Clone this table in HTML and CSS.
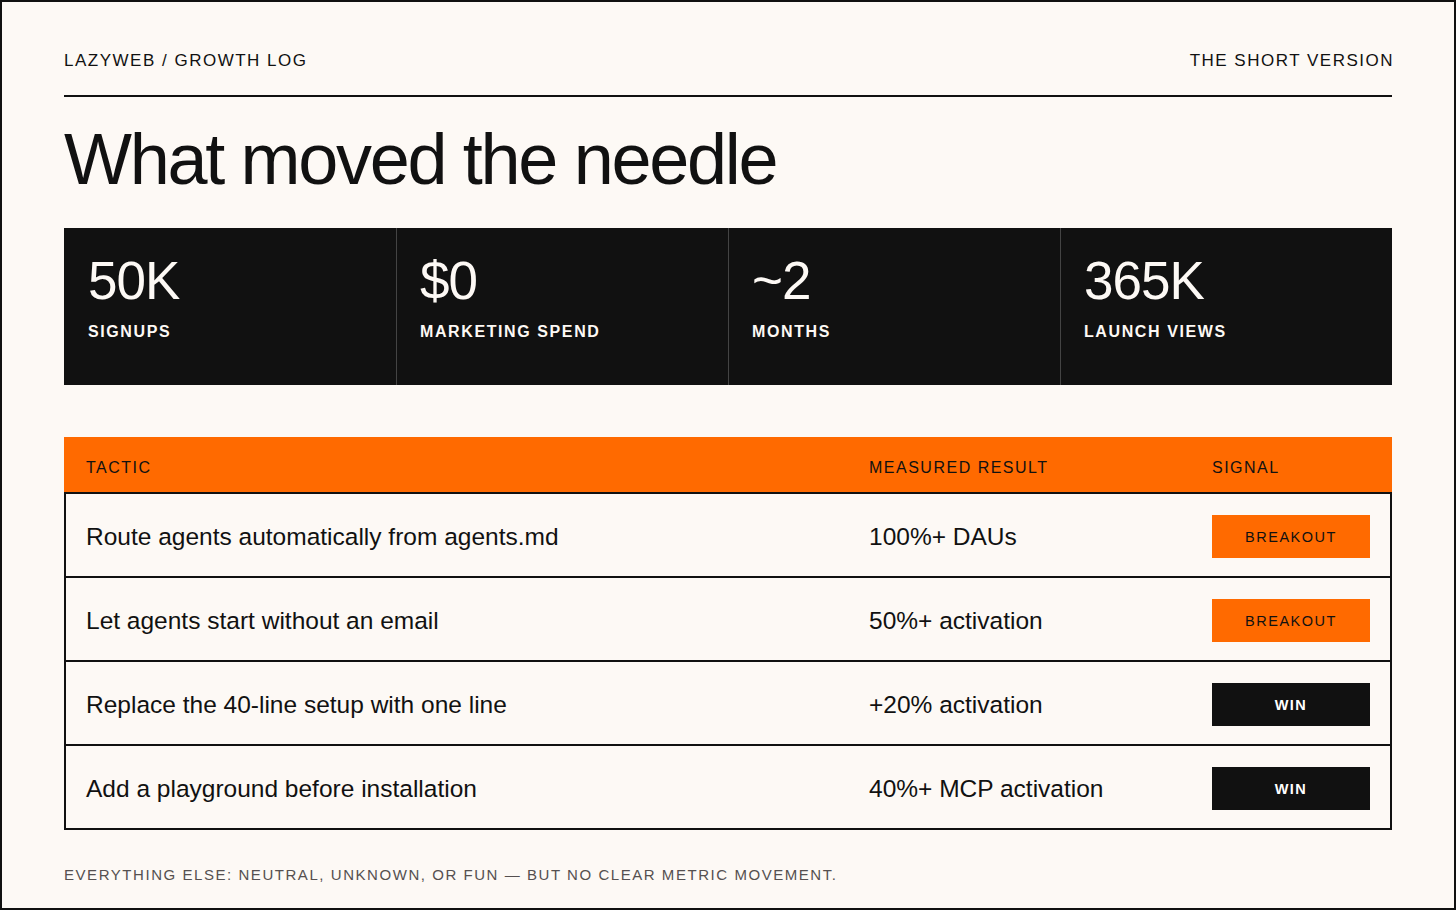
FILE: index.html
```html
<!DOCTYPE html>
<html lang="en">
<head>
<meta charset="utf-8">
<title>What moved the needle</title>
<link rel="stylesheet" href="styles.css">
</head>
<body>
<div class="frame">
  <header class="topbar">
    <span class="eyebrow">LAZYWEB / GROWTH LOG</span>
    <span class="eyebrow eyebrow-right">THE SHORT VERSION</span>
  </header>
  <h1 class="title">What moved the needle</h1>
  <section class="stats">
    <div class="stat"><div class="stat-num">50K</div><div class="stat-label">SIGNUPS</div></div>
    <div class="stat"><div class="stat-num">$0</div><div class="stat-label">MARKETING SPEND</div></div>
    <div class="stat"><div class="stat-num">~2</div><div class="stat-label">MONTHS</div></div>
    <div class="stat"><div class="stat-num">365K</div><div class="stat-label">LAUNCH VIEWS</div></div>
  </section>
  <section class="table">
    <div class="thead">
      <div class="th">TACTIC</div>
      <div class="th">MEASURED RESULT</div>
      <div class="th">SIGNAL</div>
    </div>
    <div class="tbody">
      <div class="row">
        <div class="cell">Route agents automatically from agents.md</div>
        <div class="cell">100%+ DAUs</div>
        <div class="cell"><span class="badge badge-breakout">BREAKOUT</span></div>
      </div>
      <div class="row">
        <div class="cell">Let agents start without an email</div>
        <div class="cell">50%+ activation</div>
        <div class="cell"><span class="badge badge-breakout">BREAKOUT</span></div>
      </div>
      <div class="row">
        <div class="cell">Replace the 40-line setup with one line</div>
        <div class="cell">+20% activation</div>
        <div class="cell"><span class="badge badge-win">WIN</span></div>
      </div>
      <div class="row">
        <div class="cell">Add a playground before installation</div>
        <div class="cell">40%+ MCP activation</div>
        <div class="cell"><span class="badge badge-win">WIN</span></div>
      </div>
    </div>
  </section>
  <footer class="footnote">EVERYTHING ELSE: NEUTRAL, UNKNOWN, OR FUN — BUT NO CLEAR METRIC MOVEMENT.</footer>
</div>
</body>
</html>
```
FILE: styles.css
```css
* { box-sizing: border-box; }
html, body { margin: 0; padding: 0; }
body {
  background: #fdf9f5;
  font-family: "Liberation Sans", Arial, Helvetica, sans-serif;
  color: #111111;
}
.frame {
  width: 1456px;
  height: 910px;
  border: 2px solid #111111;
  padding: 0 62px;
  display: flex;
  flex-direction: column;
}
.topbar {
  display: flex;
  justify-content: space-between;
  align-items: baseline;
  padding-top: 49px;
  padding-bottom: 24px;
  border-bottom: 2px solid #111111;
}
.eyebrow {
  font-size: 17px;
  line-height: 20px;
  letter-spacing: 1.5px;
}
.eyebrow-right { margin-right: -2px; }
.title {
  margin: 17px 0 0 0;
  font-size: 72px;
  line-height: 90px;
  font-weight: 400;
  letter-spacing: -2.3px;
}
.stats {
  margin-top: 24px;
  background: #111111;
  display: grid;
  grid-template-columns: repeat(4, 1fr);
  height: 157px;
}
.stat {
  padding: 24px 24px 0 23px;
  border-left: 1px solid #444444;
  color: #fdf9f5;
}
.stat:first-child { border-left: none; padding-left: 24px; }
.stat-num {
  font-size: 53px;
  line-height: 58px;
  letter-spacing: -1px;
}
.stat-label {
  margin-top: 12px;
  font-size: 16px;
  line-height: 20px;
  font-weight: 700;
  letter-spacing: 1.6px;
}
.table { margin-top: 52px; }
.thead {
  display: grid;
  grid-template-columns: 1fr 343px 202px;
  align-items: center;
  background: #ff6a00;
  height: 55px;
}
.th {
  padding: 6px 22px 0 22px;
  font-size: 16px;
  letter-spacing: 1.5px;
}
.tbody {
  border-left: 2px solid #111111;
  border-right: 2px solid #111111;
  border-bottom: 2px solid #111111;
}
.row {
  display: grid;
  grid-template-columns: 1fr 343px 200px;
  align-items: center;
  height: 84px;
  border-top: 2px solid #111111;
}
.cell {
  padding: 3px 20px 0 20px;
  font-size: 24.5px;
}
.cell:nth-child(2) { padding-left: 22px; }
.cell:nth-child(3) { padding: 2px 20px 0 22px; }
.badge {
  display: flex;
  align-items: center;
  justify-content: center;
  width: 158px;
  height: 43px;
  padding-top: 2px;
  font-size: 14.5px;
  letter-spacing: 1.5px;
}
.badge-breakout {
  background: #ff6a00;
  color: #111111;
}
.badge-win {
  background: #111111;
  color: #ffffff;
  font-weight: 700;
}
.footnote {
  margin-top: 35px;
  font-size: 15px;
  line-height: 20px;
  letter-spacing: 1.55px;
  color: #555050;
}
```
